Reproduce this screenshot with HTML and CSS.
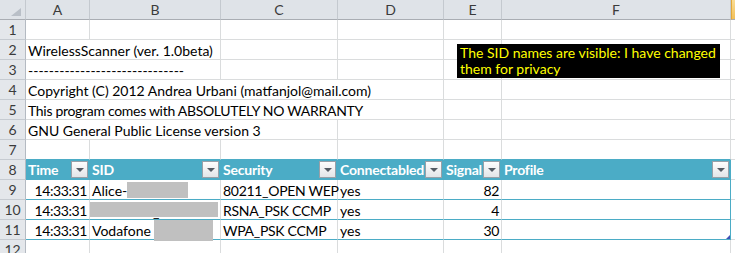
FILE: index.html
```html
<!DOCTYPE html>
<html lang="en">
<head>
    <meta charset="UTF-8">
    <title>WirelessScanner</title>
    <link rel="stylesheet" href="styles.css">
</head>
<body>
    <div class="sheet">
        <!-- column headers -->
        <div class="corner">
            <svg width="10" height="8" viewBox="0 0 10 8"><polygon points="10,0 10,8 0,8" fill="#b9bfc7"/></svg>
        </div>
        <div class="col-head">A</div>
        <div class="col-head">B</div>
        <div class="col-head">C</div>
        <div class="col-head">D</div>
        <div class="col-head">E</div>
        <div class="col-head">F</div>
        <div class="col-head selected"></div>

        <!-- 1 -->
        <div class="row-head">1</div>
        <div class="cell"></div><div class="cell"></div><div class="cell"></div><div class="cell"></div><div class="cell"></div><div class="cell"></div><div class="cell"></div>

        <!-- 2 -->
        <div class="row-head">2</div>
        <div class="cell span-2">WirelessScanner (ver. 1.0beta)</div>
        <div class="cell"></div><div class="cell"></div><div class="cell"></div><div class="cell"></div><div class="cell"></div>

        <!-- 3 -->
        <div class="row-head">3</div>
        <div class="cell span-2">------------------------------</div>
        <div class="cell"></div><div class="cell"></div><div class="cell"></div><div class="cell"></div><div class="cell"></div>

        <!-- 4 -->
        <div class="row-head">4</div>
        <div class="cell span-4">Copyright (C) 2012 Andrea Urbani (matfanjol@mail.com)</div>
        <div class="cell"></div><div class="cell"></div><div class="cell"></div>

        <!-- 5 -->
        <div class="row-head">5</div>
        <div class="cell span-4 caps">This program comes with ABSOLUTELY NO WARRANTY</div>
        <div class="cell"></div><div class="cell"></div><div class="cell"></div>

        <!-- 6 -->
        <div class="row-head">6</div>
        <div class="cell span-3">GNU General Public License version 3</div>
        <div class="cell"></div><div class="cell"></div><div class="cell"></div><div class="cell"></div>

        <!-- 7 -->
        <div class="row-head">7</div>
        <div class="cell above-table"></div><div class="cell above-table"></div><div class="cell above-table"></div><div class="cell above-table"></div><div class="cell above-table"></div><div class="cell above-table"></div><div class="cell"></div>

        <!-- 8: table header -->
        <div class="row-head">8</div>
        <div class="cell th">Time<span class="filter"></span></div>
        <div class="cell th">SID<span class="filter"></span></div>
        <div class="cell th">Security<span class="filter"></span></div>
        <div class="cell th">Connectabled<span class="filter"></span></div>
        <div class="cell th">Signal<span class="filter"></span></div>
        <div class="cell th last">Profile<span class="filter"></span></div>
        <div class="cell"></div>

        <!-- 9 -->
        <div class="row-head">9</div>
        <div class="cell td num">14:33:31</div>
        <div class="cell td">Alice-<span class="redact r1"></span></div>
        <div class="cell td caps">80211_OPEN WEP</div>
        <div class="cell td">yes</div>
        <div class="cell td num">82</div>
        <div class="cell td last"></div>
        <div class="cell"></div>

        <!-- 10 -->
        <div class="row-head">10</div>
        <div class="cell td num">14:33:31</div>
        <div class="cell td"><span class="redact r2"><span class="under">_</span></span></div>
        <div class="cell td caps">RSNA_PSK CCMP</div>
        <div class="cell td">yes</div>
        <div class="cell td num">4</div>
        <div class="cell td last"></div>
        <div class="cell"></div>

        <!-- 11 -->
        <div class="row-head">11</div>
        <div class="cell td num">14:33:31</div>
        <div class="cell td">Vodafone<span class="redact r3"></span></div>
        <div class="cell td caps">WPA_PSK CCMP</div>
        <div class="cell td">yes</div>
        <div class="cell td num">30</div>
        <div class="cell td last"><span class="resize"></span></div>
        <div class="cell"></div>

        <!-- 12 -->
        <div class="row-head">12</div>
        <div class="cell"></div><div class="cell"></div><div class="cell"></div><div class="cell"></div><div class="cell"></div><div class="cell"></div><div class="cell"></div>

        <div class="comment">The SID names are visible: I have changed<br>them for privacy</div>
    </div>
</body>
</html>
```

FILE: styles.css
```css
body {
    margin: 0;
    background-color: #fff;
    font-family: 'Lato', 'Liberation Sans', sans-serif;
    font-size: 14px;
    color: #000;
    overflow: hidden;
}

.sheet {
    position: relative;
    display: grid;
    grid-template-columns: 26px 64px 131px 117px 106px 58px 229px 1fr;
    grid-auto-rows: 20px;
    width: 735px;
    height: 253px;
    overflow: hidden;
}

.corner,
.col-head,
.row-head,
.cell {
    box-sizing: border-box;
    border-right: 1px solid #dadcdd;
    border-bottom: 1px solid #dadcdd;
    white-space: nowrap;
}

.corner {
    background-color: #dfe3e8;
    border-right-color: #c4c9cf;
    border-bottom-color: #a9adb3;
    display: flex;
    align-items: flex-end;
    justify-content: flex-end;
    padding: 0 4px 3px 0;
}

.col-head {
    background-color: #dfe3e8;
    border-right-color: #c4c9cf;
    border-bottom-color: #a9adb3;
    color: #3b3b3b;
    text-align: center;
    line-height: 19px;
}

.col-head.selected {
    background: linear-gradient(#f9dc95, #f1c05a);
    border-left: 1px solid #e2a93a;
}

.row-head {
    background-color: #e4e7eb;
    border-right-color: #b4bac2;
    border-bottom-color: #c6cbd1;
    color: #3b3b3b;
    text-align: center;
    line-height: 20px;
}

.cell {
    position: relative;
    display: flex;
    align-items: center;
    padding: 2px 2px 0;
    line-height: 18px;
}

.caps {
    letter-spacing: -0.3px;
}

.span-2 { grid-column: span 2; }
.span-3 { grid-column: span 3; }
.span-4 { grid-column: span 4; }

.above-table {
    border-bottom-color: #4bacc6;
}

.th {
    background-color: #4bacc6;
    border-right-color: #4bacc6;
    border-bottom-color: #4bacc6;
    color: #fff;
    font-weight: bold;
    letter-spacing: -0.2px;
    padding: 0 1px 0 2px;
}

.td {
    border-bottom-color: #4bacc6;
}

.last {
    border-right-color: #4bacc6;
}

.num {
    justify-content: flex-end;
    letter-spacing: -0.4px;
}

.filter {
    box-sizing: border-box;
    margin-left: auto;
    flex-shrink: 0;
    width: 17px;
    height: 17px;
    border: 1px solid #98a0a8;
    background: linear-gradient(#fdfdfd, #e3e5e8);
    position: relative;
}

.filter::after {
    content: '';
    position: absolute;
    left: 4px;
    top: 6px;
    border-left: 4px solid transparent;
    border-right: 4px solid transparent;
    border-top: 4px solid #545b64;
}

.redact {
    position: absolute;
    background-color: #c0c0c0;
}

.r1 { left: 37px; top: 2px; width: 61px; height: 16px; }
.r2 { left: 0; top: 2px; width: 128px; height: 15px; }
.r3 { left: 64px; top: 0; width: 59px; height: 21px; }

.under {
    position: absolute;
    left: 63px;
    bottom: -4px;
    line-height: 18px;
    color: #000;
}

.resize {
    position: absolute;
    right: 0;
    bottom: 0;
    width: 0;
    height: 0;
    border-left: 4px solid transparent;
    border-bottom: 4px solid #3f51b5;
}

.comment {
    position: absolute;
    left: 457px;
    top: 44px;
    width: 263px;
    height: 34px;
    box-sizing: border-box;
    padding: 1px 3px 0;
    background-color: #000;
    color: #ffff00;
    line-height: 16px;
    white-space: nowrap;
}
```
